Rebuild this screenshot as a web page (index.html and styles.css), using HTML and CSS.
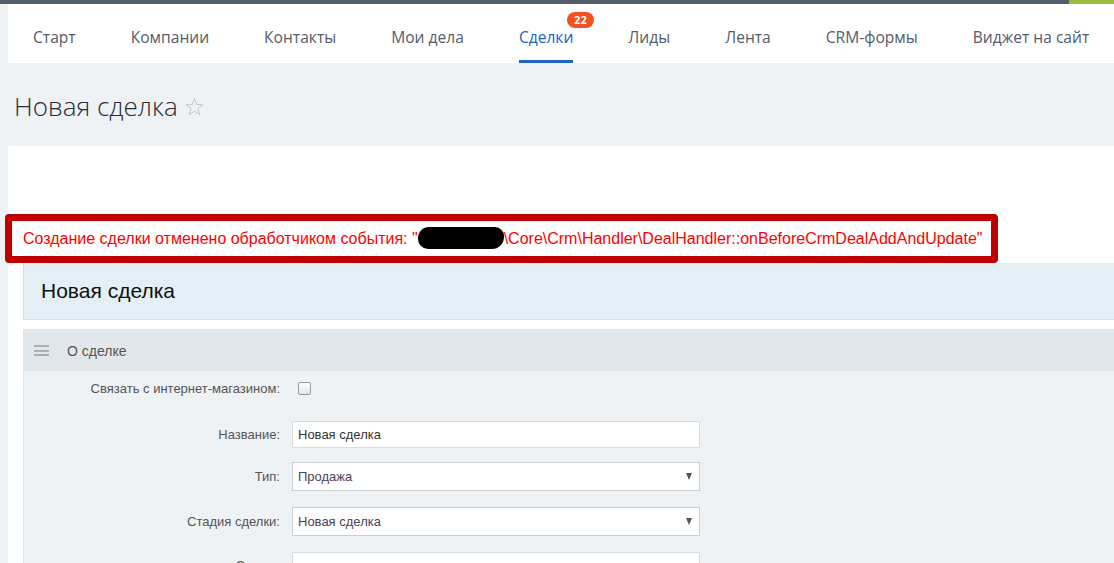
FILE: index.html
```html
<!DOCTYPE html>
<html lang="ru">
<head>
<meta charset="utf-8">
<title>Новая сделка</title>
<link rel="stylesheet" href="styles.css">
</head>
<body>
<div class="topbar"><div class="topbar-accent"></div></div>
<div class="page">
  <nav class="menu">
    <a class="menu-item">Старт</a>
    <a class="menu-item">Компании</a>
    <a class="menu-item">Контакты</a>
    <a class="menu-item">Мои дела</a>
    <a class="menu-item active">Сделки<span class="badge">22</span></a>
    <a class="menu-item">Лиды</a>
    <a class="menu-item">Лента</a>
    <a class="menu-item">CRM-формы</a>
    <a class="menu-item">Виджет на сайт</a>
  </nav>
  <div class="title-row">
    <h1 class="title">Новая сделка</h1>
    <svg class="star" width="19" height="18" viewBox="0 0 20 19"><polygon points="10,0.6 12.29,6.84 19.03,7.06 13.71,11.21 15.58,17.69 10,13.9 4.42,17.69 6.29,11.21 0.97,7.06 7.71,6.84" fill="none" stroke="#c4c4c4" stroke-width="1"/></svg>
  </div>
  <div class="panel">
    <div class="error-box">Создание сделки отменено обработчиком события: "<span class="redact"></span>\Core\Crm\Handler\DealHandler::onBeforeCrmDealAddAndUpdate"</div>
    <div class="form-head">Новая сделка</div>
    <div class="section">
      <div class="section-head">
        <span class="burger"><i></i><i></i><i></i></span>
        <span class="section-title">О сделке</span>
      </div>
      <div class="section-body">
        <div class="field field-check">
          <label class="field-label">Связать с интернет-магазином:</label>
          <span class="field-ctrl"><input type="checkbox" class="check"></span>
        </div>
        <div class="field field-name">
          <label class="field-label">Название:</label>
          <div class="input">Новая сделка</div>
        </div>
        <div class="field field-type">
          <label class="field-label">Тип:</label>
          <div class="select"><span>Продажа</span><span class="arrow"></span></div>
        </div>
        <div class="field field-stage">
          <label class="field-label">Стадия сделки:</label>
          <div class="select"><span>Новая сделка</span><span class="arrow"></span></div>
        </div>
        <div class="field field-sum">
          <label class="field-label">Сумма:</label>
          <div class="input"></div>
        </div>
      </div>
    </div>
  </div>
</div>
</body>
</html>
```
FILE: styles.css
```css
html, body {
  margin: 0;
  height: 100%;
}
body {
  background: #eef2f4;
  overflow: hidden;
  font-family: "Liberation Sans", Arial, sans-serif;
}
.topbar {
  height: 4px;
  background: #535c69;
  display: flex;
  justify-content: flex-end;
}
.topbar-accent {
  width: 45px;
  background: #9fbc3d;
}
.page {
  padding-left: 8px;
}
.menu {
  display: flex;
  gap: 55px;
  height: 59px;
  background: #fff;
  padding-left: 25px;
  font-family: "Open Sans", sans-serif;
  font-size: 15.6px;
}
.menu-item {
  position: relative;
  box-sizing: border-box;
  padding-top: 23px;
  line-height: 20px;
  color: #535c69;
  white-space: nowrap;
  text-decoration: none;
}
.menu-item.active {
  color: #2162c6;
  border-bottom: 3px solid #2162c6;
}
.badge {
  position: absolute;
  left: 48px;
  top: 8px;
  width: 27px;
  height: 16px;
  border-radius: 8px;
  background: #f4511e;
  color: #fff;
  font: 700 11px/16px "Open Sans", sans-serif;
  text-align: center;
}
.title-row {
  display: flex;
  align-items: flex-start;
  gap: 7px;
  height: 83px;
  box-sizing: border-box;
  padding: 27px 0 0 6px;
}
.title {
  margin: 0;
  font: 300 26px/32px "Open Sans", sans-serif;
  color: #2b2b33;
}
.star {
  margin-top: 8px;
}
.panel {
  background: #fff;
  padding: 68px 0 0 15px;
  height: 600px;
}
.error-box {
  margin-left: -18px;
  width: 993px;
  height: 49px;
  box-sizing: border-box;
  border: 7px solid #c00000;
  border-radius: 4px;
  padding-left: 11px;
  font-size: 16px;
  line-height: 35px;
  color: #ff0000;
  white-space: nowrap;
  background: #fff;
}
.redact {
  display: inline-block;
  width: 86px;
  height: 22px;
  background: #000;
  border-radius: 11px 9px 12px 10px;
  vertical-align: -5px;
}
.form-head {
  height: 57px;
  box-sizing: border-box;
  background: #e3eff5;
  border-left: 1px solid #d3e0e6;
  border-bottom: 1px solid #d3e0e6;
  padding-left: 17px;
  font-size: 21px;
  line-height: 56px;
  color: #111;
}
.section {
  margin-top: 9px;
  border-left: 1px solid #dde3e6;
  border-top: 1px solid #dde3e6;
}
.section-head {
  display: flex;
  align-items: center;
  height: 41px;
  background: #e1e7ea;
  padding-left: 10px;
}
.burger {
  display: flex;
  flex-direction: column;
  gap: 2.5px;
  width: 15px;
  margin-right: 18px;
}
.burger i {
  display: block;
  height: 2px;
  background: #a9aeb3;
}
.section-title {
  font-size: 14px;
  color: #555;
}
.section-body {
  background: #eef2f4;
  padding-top: 11px;
  height: 300px;
}
.field {
  display: flex;
  align-items: center;
  gap: 12px;
}
.field-label {
  width: 256px;
  text-align: right;
  font-size: 13px;
  line-height: 15px;
  color: #555;
}
.field-check {
  height: 13px;
}
.field-ctrl {
  display: flex;
  height: 13px;
  align-items: center;
}
.check {
  appearance: none;
  margin: 0 0 0 6px;
  width: 13px;
  height: 13px;
  box-sizing: border-box;
  border: 1px solid #9a9a9a;
  border-radius: 2px;
  background: linear-gradient(#fdfdfd, #e4e4e4);
}
.field-name { margin-top: 26px; }
.field-type { margin-top: 14px; }
.field-stage { margin-top: 16px; }
.field-sum { margin-top: 16px; }
.input,
.select {
  width: 408px;
  box-sizing: border-box;
  background: #fff;
  border: 1px solid #d9dcdf;
  padding: 0 5px;
  font-size: 13px;
}
.input {
  height: 27px;
  line-height: 25px;
  color: #333;
}
.select {
  height: 29px;
  line-height: 27px;
  color: #4a4455;
  display: flex;
  justify-content: space-between;
  align-items: center;
  border-color: #c9ced3;
  padding-right: 7px;
}
.arrow {
  width: 0;
  height: 0;
  border-left: 3.5px solid transparent;
  border-right: 3.5px solid transparent;
  border-top: 7px solid #555;
}
```
